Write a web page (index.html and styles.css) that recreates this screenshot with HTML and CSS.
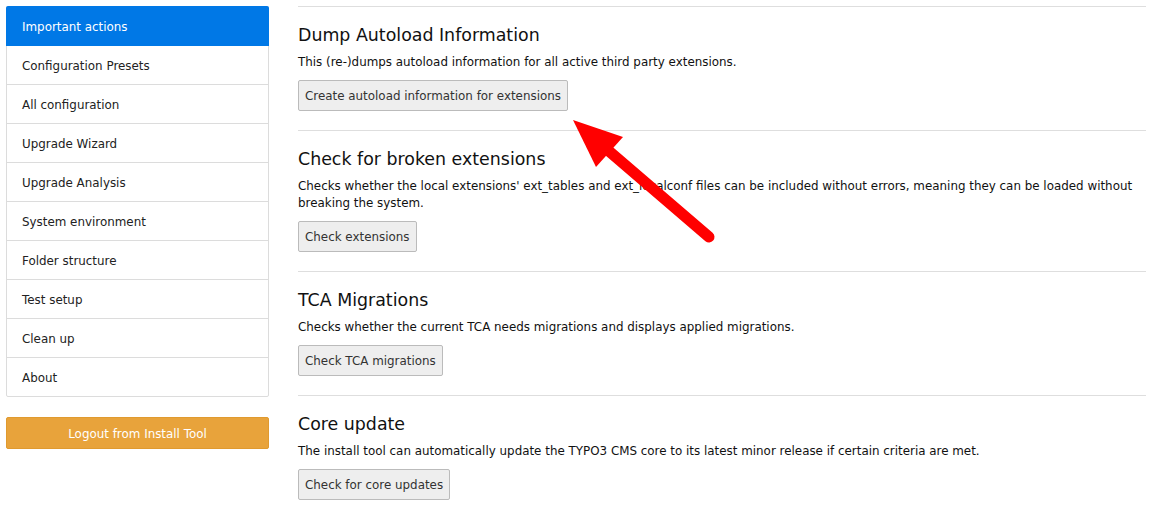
FILE: index.html
```html
<!DOCTYPE html>
<html lang="en">
<head>
<meta charset="utf-8">
<title>Install Tool</title>
<link rel="stylesheet" href="styles.css">
</head>
<body>
<div class="page">
  <aside class="sidebar">
    <nav class="menu">
      <a class="menu-item active">Important actions</a>
      <a class="menu-item">Configuration Presets</a>
      <a class="menu-item">All configuration</a>
      <a class="menu-item">Upgrade Wizard</a>
      <a class="menu-item">Upgrade Analysis</a>
      <a class="menu-item">System environment</a>
      <a class="menu-item">Folder structure</a>
      <a class="menu-item">Test setup</a>
      <a class="menu-item">Clean up</a>
      <a class="menu-item">About</a>
    </nav>
    <a class="logout">Logout from Install Tool</a>
  </aside>
  <main class="content">
    <section class="action">
      <h2 class="action-title">Dump Autoload Information</h2>
      <p class="action-desc">This (re-)dumps autoload information for all active third party extensions.</p>
      <button class="btn">Create autoload information for extensions</button>
    </section>
    <section class="action">
      <h2 class="action-title">Check for broken extensions</h2>
      <p class="action-desc">Checks whether the local extensions' ext_tables and ext_localconf files can be included without errors, meaning they can be loaded without breaking the system.</p>
      <button class="btn">Check extensions</button>
    </section>
    <section class="action">
      <h2 class="action-title">TCA Migrations</h2>
      <p class="action-desc">Checks whether the current TCA needs migrations and displays applied migrations.</p>
      <button class="btn">Check TCA migrations</button>
    </section>
    <section class="action">
      <h2 class="action-title">Core update</h2>
      <p class="action-desc">The install tool can automatically update the TYPO3 CMS core to its latest minor release if certain criteria are met.</p>
      <button class="btn">Check for core updates</button>
    </section>
  </main>
</div>
<svg class="arrow" width="1155" height="507" viewBox="0 0 1155 507" aria-hidden="true">
  <line x1="603" y1="146" x2="709" y2="237" stroke="#ff0000" stroke-width="11" stroke-linecap="round"/>
  <polygon points="573,120 623,137 596,167" fill="#ff0000"/>
</svg>
</body>
</html>
```
FILE: styles.css
```css
html, body {
  margin: 0;
  padding: 0;
  background: #fff;
}
body {
  font-family: "DejaVu Sans", Verdana, sans-serif;
  font-size: 11.9px;
  color: #111;
  overflow: hidden;
  height: 507px;
}
.page {
  display: flex;
  gap: 29px;
  padding: 6px;
  align-items: flex-start;
}
.sidebar {
  width: 263px;
  flex: none;
  display: flex;
  flex-direction: column;
  gap: 20px;
}
.menu {
  display: flex;
  flex-direction: column;
  border: 1px solid #dcdcdc;
  border-radius: 2px;
}
.menu-item {
  display: block;
  height: 36px;
  line-height: 36px;
  padding: 2px 15px 0;
  color: #222;
  border-bottom: 1px solid #dcdcdc;
}
.menu-item:last-child {
  border-bottom: none;
}
.menu-item.active {
  background: #0078e6;
  color: #fff;
  margin: -1px -1px 0;
  padding: 3px 16px 0;
  border-bottom-color: #0078e6;
  border-radius: 2px 2px 0 0;
}
.logout {
  display: block;
  height: 28px;
  line-height: 28px;
  padding-top: 2px;
  text-align: center;
  background: #e8a33b;
  border: 1px solid #e09a2f;
  border-radius: 2px;
  color: #fff;
}
.content {
  width: 848px;
  flex: none;
}
.action {
  border-top: 1px solid #dedede;
  padding: 17px 0 19px;
}
.action-title {
  margin: 0;
  font-weight: normal;
  font-size: 17.4px;
  line-height: 22px;
  color: #111;
}
.action-desc {
  margin: 8px 0 9px;
  line-height: 17px;
}
.btn {
  display: inline-block;
  height: 31px;
  padding: 0 6px;
  font-family: inherit;
  font-size: 11.9px;
  color: #333;
  background: #eeeeee;
  border: 1px solid #bbbbbb;
  border-radius: 2px;
}
.arrow {
  position: absolute;
  left: 0;
  top: 0;
  pointer-events: none;
}
```
